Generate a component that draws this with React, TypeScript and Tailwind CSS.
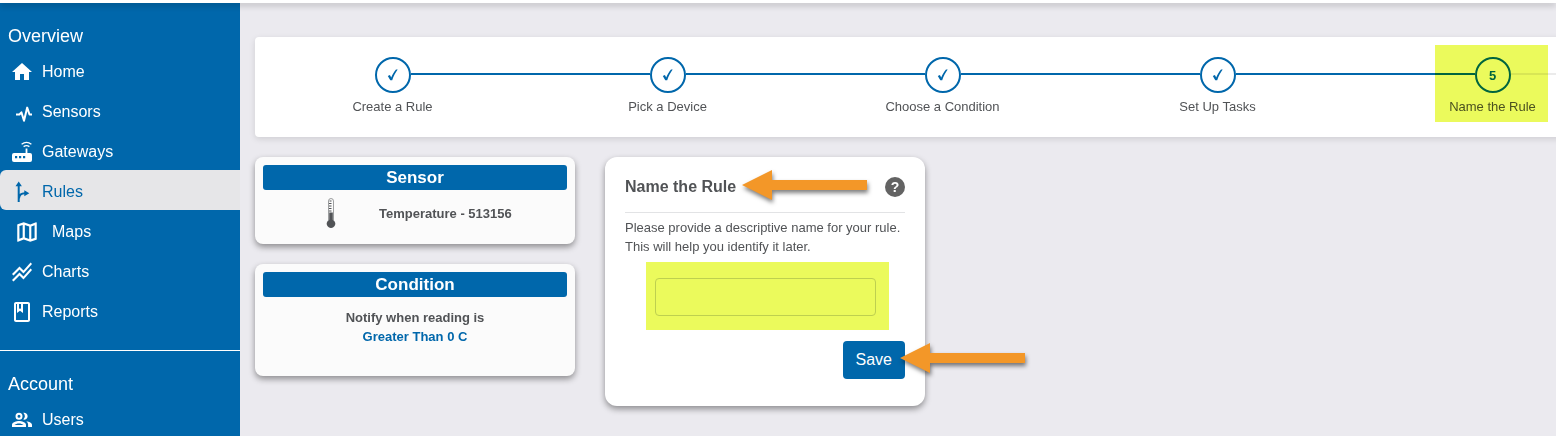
import type { ReactNode } from 'react';
import { MdHome, MdOutlineBook, MdOutlineMap, MdStackedLineChart } from 'react-icons/md';

type NavItem = {
  label: string;
  icon: ReactNode;
  active?: boolean;
  indent?: boolean;
};

function PulseIcon() {
  return (
    <svg width="24" height="24" viewBox="0 0 24 24" fill="none" stroke="currentColor" strokeWidth="2" strokeLinejoin="round" aria-hidden="true">
      <path d="M6 14.5h3.4l2-2.2 2.6 8.4L17.2 7.6l2.3 6.9H22" />
    </svg>
  );
}

function GatewayIcon() {
  return (
    <svg width="24" height="24" viewBox="0 0 24 24" fill="none" aria-hidden="true">
      <rect x="2" y="13" width="20" height="9" rx="2" fill="currentColor" />
      <path d="M16.5 8.5V14" stroke="currentColor" strokeWidth="1.8" />
      <path d="M13.6 6.6q2.9-2 5.8 0M11.6 4.2q4.9-3.6 9.8 0" stroke="currentColor" strokeWidth="1.3" />
      <path d="M5 16h2.2v2.2H5zM9 16h2.2v2.2H9zM13 16h2.2v2.2H13z" fill="#0067ab" />
    </svg>
  );
}

function RulesIcon() {
  return (
    <svg width="24" height="24" viewBox="0 0 24 24" fill="none" aria-hidden="true">
      <path d="M8.7 4v18M9 18.5q.2-5.2 6-5.2" stroke="currentColor" strokeWidth="2" />
      <path d="M8.7 1.4l3.2 4.8H5.500zM19.300 13.300l-5 3v-6z" fill="currentColor" />
    </svg>
  );
}

function UsersIcon() {
  return (
    <svg width="24" height="24" viewBox="0 0 24 24" aria-hidden="true">
      <circle cx="9" cy="8.200" r="2.500" fill="none" stroke="currentColor" strokeWidth="2" />
      <path d="M13.300 4.800a3.500 3.500 0 1 1 0 6.800 5 5 0 0 0 0-6.800z" fill="currentColor" />
      <path
        d="M9 13c-2.400 0-7 1.200-7 3.800V19h14v-2.200C16 14.200 11.400 13 9 13zm-4.600 4.100C5.300 16.200 7.300 15.500 9 15.500s3.700.7 4.600 1.600z"
        fill="currentColor"
        fillRule="evenodd"
      />
      <path d="M16.300 13.200c1.100.9 1.800 2.100 1.800 3.600V19H22v-2.200c0-2-2.800-3.200-5.700-3.600z" fill="currentColor" />
    </svg>
  );
}

function ThermometerIcon() {
  return (
    <svg className="shrink-0 text-[#515356]" width="24" height="30" viewBox="0 0 24 30" fill="none" aria-hidden="true">
      <path d="M9.500 22V3a2.500 2.500 0 0 1 5 0v19" stroke="currentColor" strokeWidth="1" strokeOpacity="0.55" />
      <path d="M10.500 3h2M10 5.500h2.500M10 8h2.500M10 10.500h2.500M10 13h2.500" stroke="currentColor" strokeWidth="1.200" />
      <path d="M10.200 14.500h3.600v7.300a4.300 4.300 0 1 1-3.600 0z" fill="currentColor" />
    </svg>
  );
}

function CheckIcon() {
  return (
    <svg width="12" height="12" viewBox="0 0 12 12" fill="currentColor" role="img" aria-label="Completed">
      <path d="M.8 6.900l2.100-.8 1.300 2.300C5.500 5.400 7 2.700 9 .5h1.700C8.400 3.600 6.500 7.200 5.200 11.200H3.300z" />
    </svg>
  );
}

function Arrow({ className }: { className: string }) {
  return (
    <svg
      className={`pointer-events-none absolute drop-shadow-[1px_3px_2px_rgba(0,0,0,0.5)] ${className}`}
      width="125"
      height="30"
      viewBox="0 0 125 30"
      aria-hidden="true"
    >
      <path d="M0 15L30 0v10h95v10H30v10z" fill="#f39728" />
    </svg>
  );
}

function Highlight({ className }: { className: string }) {
  return <span className={`pointer-events-none absolute bg-[#ebfa5c] mix-blend-multiply ${className}`} aria-hidden="true" />;
}

const overviewItems: NavItem[] = [
  { label: 'Home', icon: <MdHome size={24} /> },
  { label: 'Sensors', icon: <PulseIcon /> },
  { label: 'Gateways', icon: <GatewayIcon /> },
  { label: 'Rules', icon: <RulesIcon />, active: true },
  { label: 'Maps', icon: <MdOutlineMap size={26} />, indent: true },
  { label: 'Charts', icon: <MdStackedLineChart size={24} /> },
  { label: 'Reports', icon: <MdOutlineBook size={24} /> },
];

const accountItems: NavItem[] = [{ label: 'Users', icon: <UsersIcon /> }];

const steps = ['Create a Rule', 'Pick a Device', 'Choose a Condition', 'Set Up Tasks', 'Name the Rule'];

function NavSection({ title, items }: { title: string; items: NavItem[] }) {
  return (
    <section className="pt-[19px]">
      <h2 className="px-2 text-lg leading-7">{title}</h2>
      <ul>
        {items.map((item) => (
          <li key={item.label}>
            <a
              href="#"
              aria-current={item.active ? 'page' : undefined}
              className={`flex h-10 items-center pt-1 text-base ${item.indent ? 'gap-3 pl-[14px]' : 'gap-2 pl-[10px]'} ${
                item.active ? 'rounded-l-md bg-[#e6e6e8] text-[#0067ab]' : 'text-white'
              }`}
            >
              <span className="flex min-w-6 justify-center">{item.icon}</span>
              {item.label}
            </a>
          </li>
        ))}
      </ul>
    </section>
  );
}

function Stepper() {
  const current = steps.length - 1;

  return (
    <ol className="flex h-[100px] w-max min-w-full rounded bg-white pt-5 shadow-[0_2px_6px_rgba(0,0,0,0.12)]">
      {steps.map((step, index) => (
        <li key={step} className="relative w-[275px] shrink-0 text-center" aria-current={index === current ? 'step' : undefined}>
          <div className="flex items-start">
            <span className={`mt-4 h-0.5 flex-1 ${index === 0 ? 'bg-transparent' : 'bg-[#0067ab]'}`} />
            <span className="flex size-9 items-center justify-center rounded-full border-2 border-[#0067ab] font-bold text-[#0067ab]">
              {index < current ? <CheckIcon /> : index + 1}
            </span>
            <span className={`mt-4 h-0.5 flex-1 ${index === current ? 'bg-[#ebebeb]' : 'bg-[#0067ab]'}`} />
          </div>
          <span className="mt-1 block">{step}</span>
          {index === current && <Highlight className="-top-3 left-20 h-[77px] w-[113px]" />}
        </li>
      ))}
    </ol>
  );
}

function SummaryCard({ title, children }: { title: string; children: ReactNode }) {
  return (
    <section className="rounded-lg bg-[#fbfbfb] p-2 font-bold shadow-[0_3px_6px_rgba(0,0,0,0.4)]">
      <h3 className="rounded-[3px] bg-[#0067ab] text-center text-[17px] leading-[25px] text-white">{title}</h3>
      {children}
    </section>
  );
}

export default function App() {
  return (
    <div className="flex h-screen flex-col overflow-hidden bg-[#ebeaef] font-['Liberation_Sans',Arial,sans-serif] text-[13px] leading-[19px] text-[#515356]">
      <header className="relative z-10 h-[3px] shrink-0 bg-white shadow-[0_2px_6px_rgba(0,0,0,0.3)]" />

      <div className="flex min-h-0 flex-1">
        <nav className="w-60 shrink-0 overflow-hidden bg-[#0067ab] text-white">
          <NavSection title="Overview" items={overviewItems} />
          <hr className="mt-5 border-white" />
          <NavSection title="Account" items={accountItems} />
        </nav>

        <main className="min-w-0 flex-1 overflow-hidden pl-[15px] pt-[34px]">
          <Stepper />

          <div className="mt-5 flex items-start gap-[30px]">
            <div className="flex w-80 flex-col gap-5">
              <SummaryCard title="Sensor">
                <div className="flex items-center gap-9 pb-2 pl-14 pt-2">
                  <ThermometerIcon />
                  <span>Temperature - 513156</span>
                </div>
              </SummaryCard>
              <SummaryCard title="Condition">
                <div className="pb-[22px] pt-[11px] text-center">
                  <p>Notify when reading is</p>
                  <p className="text-[#0067ab]">Greater Than 0 C</p>
                </div>
              </SummaryCard>
            </div>

            <form
              className="w-80 rounded-xl bg-white px-5 pb-[27px] pt-5 shadow-[0_3px_6px_rgba(0,0,0,0.4)]"
              onSubmit={(e) => e.preventDefault()}
            >
              <div className="relative flex items-center justify-between border-b border-[#e2e3e5] pb-[15px]">
                <h3 className="text-base leading-5 font-bold">Name the Rule</h3>
                <button
                  type="button"
                  aria-label="Help"
                  className="size-5 rounded-full bg-[#636363] text-center text-sm leading-5 font-bold text-white"
                >
                  ?
                </button>
                <Arrow className="-top-[7px] left-[117px]" />
              </div>
              <label htmlFor="rule-name" className="mt-[5px] block">
                Please provide a descriptive name for your rule. This will help you identify it later.
              </label>
              <div className="relative ml-[30px] mr-[29px] mt-[22px]">
                <input
                  id="rule-name"
                  type="text"
                  className="block h-[38px] w-full rounded border border-[#ced4da] bg-white px-3 text-base outline-none"
                />
                <Highlight className="-top-4 -left-[9px] h-[68px] w-[243px]" />
              </div>
              <div className="mt-[25px] flex justify-end">
                <div className="relative">
                  <button type="submit" className="block rounded bg-[#0067ab] px-[13px] py-[7px] text-base leading-6 text-white">
                    Save
                  </button>
                  <Arrow className="top-0.5 left-[57px]" />
                </div>
              </div>
            </form>
          </div>
        </main>
      </div>
    </div>
  );
}
